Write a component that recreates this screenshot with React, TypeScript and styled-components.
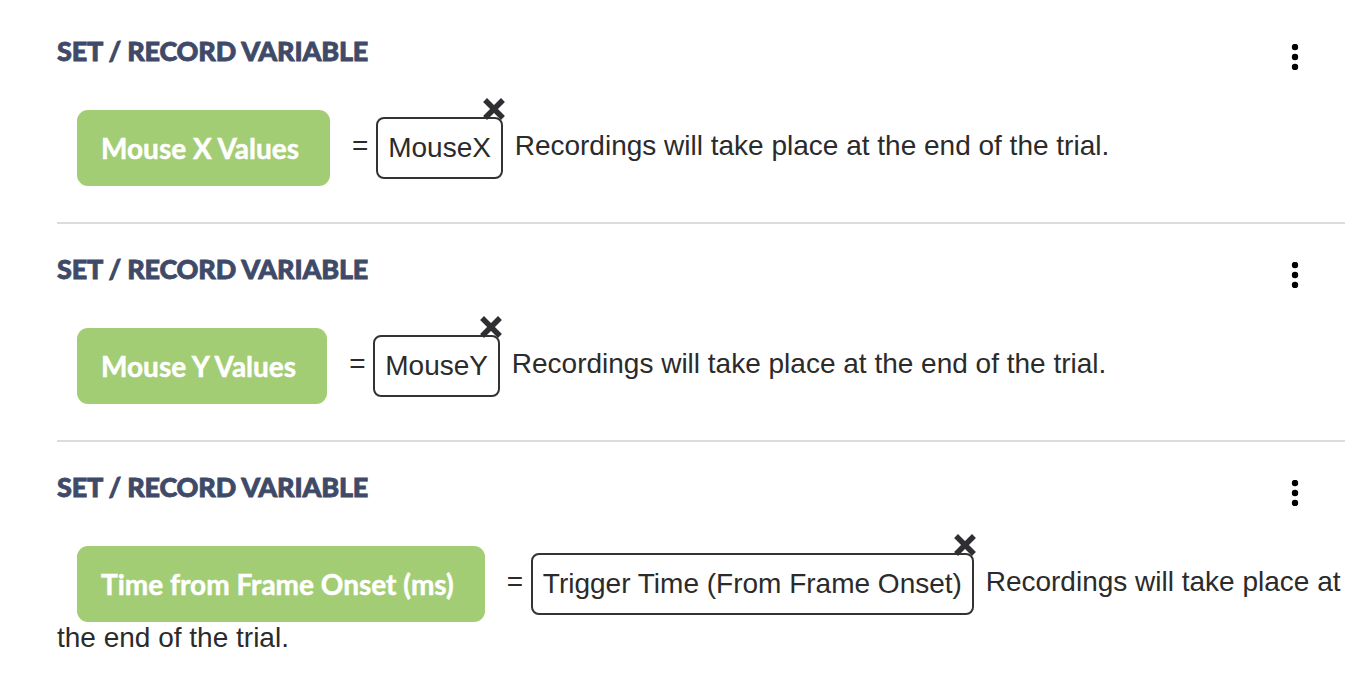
import React from "react";
import styled, { createGlobalStyle } from "styled-components";

const Global = createGlobalStyle`
  html, body { margin: 0; padding: 0; background: #ffffff; }
  body { font-family: "Liberation Sans", Arial, sans-serif; color: #2b2b2b; }
`;

const Page = styled.div`
  padding: 37px 27px 0 57px;
`;

const Section = styled.section<{ $first?: boolean; $last?: boolean }>`
  padding: ${(p) => (p.$first ? "0" : "31px")} 0 ${(p) => (p.$last ? "0" : "36px")} 0;
  border-bottom: ${(p) => (p.$last ? "none" : "2px solid #dcdcdc")};
`;

const HeaderRow = styled.div`
  display: flex;
  justify-content: space-between;
  align-items: flex-start;
`;

const Heading = styled.h2`
  margin: 0;
  font-family: Lato, "Open Sans", sans-serif;
  font-weight: 900;
  font-size: 27px;
  line-height: 28px;
  color: #3e4a68;
  letter-spacing: -0.2px;
  -webkit-text-stroke: 0.8px #3e4a68;
`;

const Kebab = styled.button`
  margin: 7px 44px 0 0;
  padding: 0;
  border: 0;
  background: none;
  width: 12px;
  height: 26px;
  display: flex;
  cursor: pointer;
`;

const Row = styled.p`
  margin: 40px 0 0 0;
  font-size: 28px;
  line-height: normal;
  color: #2b2b2b;
`;

const VarButton = styled.span`
  display: inline-block;
  vertical-align: middle;
  box-sizing: border-box;
  height: 76px;
  line-height: 76px;
  margin: 0 22px 0 20px;
  padding: 0 31px 0 24px;
  background: #a3cd74;
  border-radius: 11px;
  color: #ffffff;
  font-family: Lato, "Open Sans", sans-serif;
  font-weight: 700;
  font-size: 28px;
  -webkit-text-stroke: 0.5px #ffffff;
  white-space: nowrap;
`;

const ValueBox = styled.span`
  position: relative;
  display: inline-block;
  vertical-align: middle;
  padding: 13px 10px;
  margin-right: 4px;
  border: 2px solid #333333;
  border-radius: 8px;
  line-height: normal;
  white-space: nowrap;
`;

const Remove = styled.svg`
  position: absolute;
  top: -21px;
  right: -4px;
  width: 22px;
  height: 22px;
`;

const KebabIcon = () => (
  <svg width="12" height="26" viewBox="0 0 12 26">
    <circle cx="6" cy="3" r="3.2" fill="#000" />
    <circle cx="6" cy="13" r="3.2" fill="#000" />
    <circle cx="6" cy="23" r="3.2" fill="#000" />
  </svg>
);

const items = [
  { name: "Mouse X Values", value: "MouseX" },
  { name: "Mouse Y Values", value: "MouseY" },
  { name: "Time from Frame Onset (ms)", value: "Trigger Time (From Frame Onset)" },
];

export default function App() {
  return (
    <>
      <Global />
      <Page>
        {items.map((it, i) => (
          <Section key={i} $first={i === 0} $last={i === items.length - 1}>
            <HeaderRow>
              <Heading>SET / RECORD VARIABLE</Heading>
              <Kebab aria-label="menu">
                <KebabIcon />
              </Kebab>
            </HeaderRow>
            <Row>
              <VarButton>{it.name}</VarButton>={" "}
              <ValueBox>
                {it.value}
                <Remove viewBox="0 0 22 22">
                  <path d="M4 4 L18 18 M18 4 L4 18" stroke="#2f2f33" strokeWidth="5.5" strokeLinecap="square" />
                </Remove>
              </ValueBox>{" "}
              Recordings will take place at the end of the trial.
            </Row>
          </Section>
        ))}
      </Page>
    </>
  );
}
